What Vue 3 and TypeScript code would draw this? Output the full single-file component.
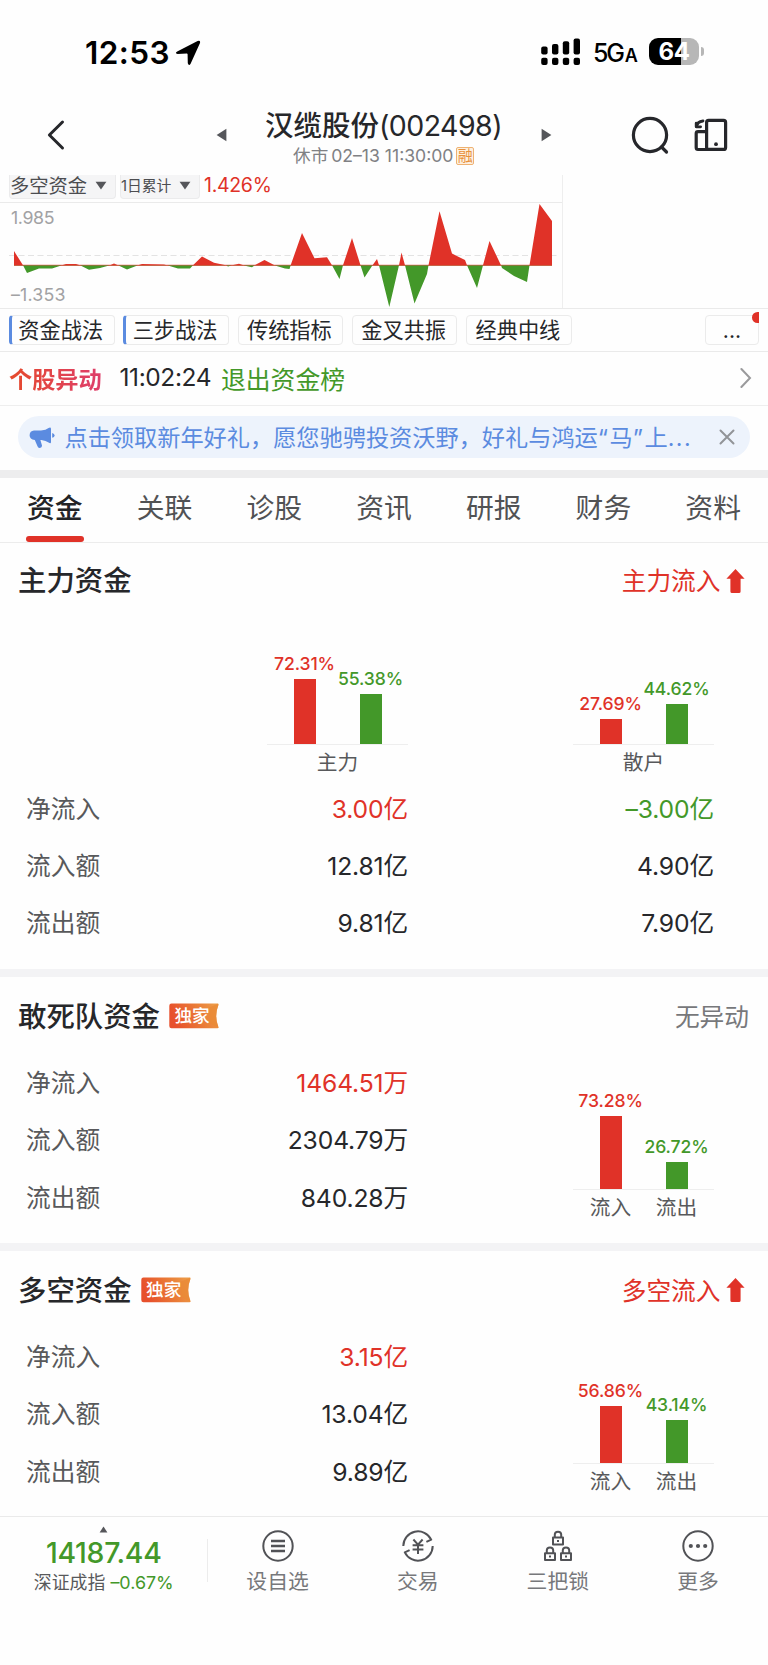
<script setup lang="ts">
interface Bar { pct: number; tone: 'up' | 'down'; label?: string }
interface Row { label: string; values: { text: string; tone?: 'up' | 'down' }[] }

const shortcuts = [
  { name: '资金战法', marked: true },
  { name: '三步战法', marked: true },
  { name: '传统指标', marked: false },
  { name: '金叉共振', marked: false },
  { name: '经典中线', marked: false },
]

const tabs = ['资金', '关联', '诊股', '资讯', '研报', '财务', '资料']

const mainGroups: { name: string; bars: Bar[] }[] = [
  { name: '主力', bars: [{ pct: 72.31, tone: 'up' }, { pct: 55.38, tone: 'down' }] },
  { name: '散户', bars: [{ pct: 27.69, tone: 'up' }, { pct: 44.62, tone: 'down' }] },
]

const mainRows: Row[] = [
  { label: '净流入', values: [{ text: '3.00亿', tone: 'up' }, { text: '–3.00亿', tone: 'down' }] },
  { label: '流入额', values: [{ text: '12.81亿' }, { text: '4.90亿' }] },
  { label: '流出额', values: [{ text: '9.81亿' }, { text: '7.90亿' }] },
]

const panels: { title: string; status: string; rising: boolean; rows: Row[]; bars: Bar[] }[] = [
  {
    title: '敢死队资金',
    status: '无异动',
    rising: false,
    rows: [
      { label: '净流入', values: [{ text: '1464.51万', tone: 'up' }] },
      { label: '流入额', values: [{ text: '2304.79万' }] },
      { label: '流出额', values: [{ text: '840.28万' }] },
    ],
    bars: [{ pct: 73.28, tone: 'up', label: '流入' }, { pct: 26.72, tone: 'down', label: '流出' }],
  },
  {
    title: '多空资金',
    status: '多空流入',
    rising: true,
    rows: [
      { label: '净流入', values: [{ text: '3.15亿', tone: 'up' }] },
      { label: '流入额', values: [{ text: '13.04亿' }] },
      { label: '流出额', values: [{ text: '9.89亿' }] },
    ],
    bars: [{ pct: 56.86, tone: 'up', label: '流入' }, { pct: 43.14, tone: 'down', label: '流出' }],
  },
]

// Zero line of the trend plot, in plot units
const zero = 62.3
const series: [number, number][] = [
  [14, 48], [23, 62.3], [27, 70], [39, 65.5], [52, 65.5], [62, 62.3], [66, 61], [76, 61], [80, 62.3],
  [89, 66.8], [100, 65], [110, 62.3], [114, 60.6], [118, 62.3], [127, 66.5], [138, 62.3], [142, 61],
  [164, 61.4], [167, 62.3], [178, 65.6], [190, 65.6], [193, 62.3], [202, 53.5], [214, 59.8], [226, 62.3],
  [228, 63.6], [232, 62.3], [239, 60.8], [245, 62.8], [252, 64.2], [256, 61.5], [264.5, 57], [275, 62.4],
  [285, 65.4], [289.5, 66], [291, 61.3], [302, 30], [314.5, 55.3], [327, 54.3], [332, 62.3], [339.5, 76],
  [343, 62.3], [352, 35], [360.5, 62.3], [364.5, 74.5], [372, 63], [377, 56], [379, 62.3], [389.3, 104],
  [399, 62.3], [401.5, 49.6], [405, 62.3], [414.5, 100.6], [427, 71], [428.5, 62.3], [439.5, 8.3],
  [452, 50.6], [465, 57], [467, 62.3], [477, 85], [483, 62.3], [489.5, 38], [501, 62.3], [502, 65],
  [514, 73], [527, 79], [529.5, 62.3], [539.5, 1], [552, 18],
]
const area = `M14 ${zero} ` + series.map(([x, y]) => `L${x} ${y}`).join(' ') + ` L552 ${zero} Z`
const risingArrow = 'M9.5 1 L18.6 10.8 H14.6 V23.4 Q14.6 25 13 25 H6 Q4.4 25 4.4 23.4 V10.8 H.4Z'
</script>

<template>
  <div class="screen">
    <div class="statusbar">
      <span class="clock">12:53</span>
      <svg class="locate" width="26" height="26" viewBox="0 0 26 26">
        <path d="M2.2 11.6 L22.6 1 Q25.6 0 25 3 L15.6 23.8 Q13.8 26.4 12.8 23.2 L12.6 14.2 Q12.5 13.5 11.8 13.4 L2.6 13.9 Q-.6 13.4 2.2 11.6Z" />
      </svg>
      <svg class="signal" width="40" height="28" viewBox="0 0 40 28">
        <g>
          <rect x="0.2" y="8.5" width="6.4" height="8" rx="2" /><rect x="11" y="6" width="6.4" height="10.5" rx="2" />
          <rect x="21.8" y="3.2" width="6.4" height="13.3" rx="2" /><rect x="32.6" y="0.4" width="6.4" height="16.1" rx="2" />
          <rect x="0.2" y="19.8" width="6.4" height="7.2" rx="2" /><rect x="11" y="19.8" width="6.4" height="7.2" rx="2" />
          <rect x="21.8" y="19.8" width="6.4" height="7.2" rx="2" /><rect x="32.6" y="19.8" width="6.4" height="7.2" rx="2" />
        </g>
      </svg>
      <span class="network">5G<small>A</small></span>
      <span class="battery">64</span>
      <span class="battery-tip"></span>
    </div>

    <header class="header">
      <svg class="back" width="20" height="32" viewBox="0 0 20 32"><path d="M16.5 3 L3.4 16 L16.5 29" /></svg>
      <svg class="prev" width="11" height="14" viewBox="0 0 11 14"><path d="M10.4 .8 V13.2 L.6 7Z" /></svg>
      <div class="stock">
        <h1>汉缆股份<span>(002498)</span></h1>
        <p>休市 <span>02–13 11:30:00</span><i>融</i></p>
      </div>
      <svg class="next" width="11" height="14" viewBox="0 0 11 14"><path d="M.6 .8 V13.2 L10.4 7Z" /></svg>
      <svg class="tool search" width="40" height="40" viewBox="0 0 40 40"><circle cx="19" cy="20" r="16.6" /><path d="M30.5 32 L35.5 37" /></svg>
      <svg class="tool layout" width="34" height="34" viewBox="0 0 34 34">
        <rect x="12.6" y="2.4" width="19" height="29" rx="2" />
        <path d="M12 13.6 H4 Q2.2 13.6 2.2 15.4 V29.6 Q2.2 31.5 4 31.5 H13" />
        <path class="turn" d="M2.6 8.6 Q3.2 3.6 9 3" /><path class="turn" d="M2.2 5.2 V8.8 H6.6" />
        <circle class="dot" cx="22" cy="26.2" r="1.9" />
      </svg>
    </header>

    <section class="indicator">
      <div class="selects">
        <span class="select wide">多空资金<svg width="12" height="9" viewBox="0 0 12 9"><path d="M.6 .8 H11.4 L6 8.6Z" /></svg></span>
        <span class="select slim">1日累计<svg width="12" height="9" viewBox="0 0 12 9"><path d="M.6 .8 H11.4 L6 8.6Z" /></svg></span>
        <b>1.426%</b>
      </div>
      <div class="plot">
        <svg width="562" height="105" viewBox="0 0 562 105">
          <defs>
            <clipPath id="above"><rect x="0" y="0" width="562" height="62.3" /></clipPath>
            <clipPath id="below"><rect x="0" y="62.3" width="562" height="43" /></clipPath>
          </defs>
          <path class="dash" d="M9 52.5 H560" />
          <path class="zero" d="M14 62.3 H552" />
          <path class="fill-up" :d="area" clip-path="url(#above)" />
          <path class="fill-down" :d="area" clip-path="url(#below)" />
        </svg>
        <span class="axis top">1.985</span>
        <span class="axis bottom">–1.353</span>
      </div>
    </section>

    <nav class="shortcuts">
      <a v-for="s in shortcuts" :key="s.name" :class="{ marked: s.marked }">{{ s.name }}</a>
      <a class="more">...<i></i></a>
    </nav>

    <div class="alert">
      <strong>个股异动</strong><time>11:02:24</time><em>退出资金榜</em>
      <svg width="12" height="22" viewBox="0 0 12 22"><path d="M1.4 2 L10 11 L1.4 20" /></svg>
    </div>

    <div class="notice-wrap">
      <div class="notice">
        <svg class="horn" width="26" height="22" viewBox="0 0 26 22">
          <path d="M5 3.6 H12 Q17 3.2 19.6 1 Q22 -.2 22 2 V15 Q22 17 19.6 15.6 Q17 13.6 12.4 13 L11.4 13 L13 18.5 Q13.2 21 10.8 21 Q9.4 21 8.6 19.4 L5.8 13 Q.6 12.4 .6 8.2 Q.8 4 5 3.6Z" />
          <path d="M23.2 6 Q25.6 6.6 25.6 8.4 Q25.6 10.2 23.2 10.8Z" />
        </svg>
        <p>点击领取新年好礼，愿您驰骋投资沃野，好礼与鸿运<q>“</q>马<q>”</q>上<q>...</q></p>
        <svg class="close" width="16" height="16" viewBox="0 0 16 16"><path d="M1.5 1.5 L14.5 14.5 M14.5 1.5 L1.5 14.5" /></svg>
      </div>
    </div>

    <nav class="tabs">
      <a v-for="(t, i) in tabs" :key="t" :class="{ active: i === 0 }">{{ t }}</a>
    </nav>

    <section class="panel main">
      <div class="panel-head">
        <h2>主力资金</h2>
        <span class="status up">主力流入<svg width="19" height="26" viewBox="0 0 19 26"><path :d="risingArrow" /></svg></span>
      </div>
      <div class="groups">
        <div v-for="g in mainGroups" :key="g.name" class="chart">
          <div class="bars">
            <div v-for="b in g.bars" :key="b.pct" class="bar" :class="b.tone">
              <span>{{ b.pct.toFixed(2) }}%</span>
              <i :style="{ height: b.pct * 0.891 + 'px' }"></i>
            </div>
          </div>
          <div class="names"><span>{{ g.name }}</span></div>
        </div>
      </div>
      <div class="rows">
        <div v-for="r in mainRows" :key="r.label" class="row">
          <label>{{ r.label }}</label>
          <span v-for="v in r.values" :key="v.text" :class="v.tone">{{ v.text }}</span>
        </div>
      </div>
    </section>

    <section v-for="p in panels" :key="p.title" class="panel split">
      <div class="panel-head">
        <h2>{{ p.title }}</h2>
        <span class="tag">
          <svg width="50" height="26" viewBox="0 0 50 26">
            <defs>
              <linearGradient id="tagfill" x1="0" x2="1" y1="0.2" y2="0"><stop offset="0" stop-color="#e7502c" /><stop offset=".55" stop-color="#ea7c37" /><stop offset="1" stop-color="#eda04a" /></linearGradient>
            </defs>
            <path fill="url(#tagfill)" d="M2.5 .6 H48.6 Q50 .6 49.4 2 Q45 13 49.4 23.8 Q50 25.2 48.6 25.2 H2.5 Q.3 25.2 .3 23 V2.8 Q.3 .6 2.5 .6Z" />
            <path fill="#e98a35" opacity=".75" d="M49 .8 L39 5 L40.5 20 L49.4 25 Q45 13 49.4 2Z" />
          </svg>
          <b>独家</b>
        </span>
        <span class="status" :class="{ up: p.rising }">{{ p.status }}<svg v-if="p.rising" width="19" height="26" viewBox="0 0 19 26"><path :d="risingArrow" /></svg></span>
      </div>
      <div class="body">
        <div class="rows">
          <div v-for="r in p.rows" :key="r.label" class="row">
            <label>{{ r.label }}</label>
            <span v-for="v in r.values" :key="v.text" :class="v.tone">{{ v.text }}</span>
          </div>
        </div>
        <div class="chart">
          <div class="bars">
            <div v-for="b in p.bars" :key="b.pct" class="bar" :class="b.tone">
              <span>{{ b.pct.toFixed(2) }}%</span>
              <i :style="{ height: b.pct + 'px' }"></i>
            </div>
          </div>
          <div class="names"><span v-for="b in p.bars" :key="b.pct">{{ b.label }}</span></div>
        </div>
      </div>
    </section>

    <footer class="bottombar">
      <div class="index">
        <svg width="9" height="7" viewBox="0 0 9 7"><path d="M4.5 .4 L8.4 6.4 H.6Z" /></svg>
        <strong>14187.44</strong>
        <p>深证成指 <span>–0.67%</span></p>
      </div>
      <a>
        <svg width="32" height="32" viewBox="0 0 32 32"><circle cx="16" cy="16" r="14.7" /><path class="thick" d="M9 11 H23 M9 16 H23 M9 21 H23" /></svg>设自选
      </a>
      <a>
        <svg width="32" height="32" viewBox="0 0 32 32">
          <path d="M1.3 16 A14.7 14.7 0 0 1 29.2 9.6 L24.4 11.8" /><path d="M30.7 16 A14.7 14.7 0 0 1 2.8 22.4 L7.6 20.2" />
          <path d="M11.4 9.5 L16 14.6 L20.6 9.5 M16 14.6 V24 M10.6 15.2 H21.4 M10.6 19.4 H21.4" />
        </svg>交易
      </a>
      <a>
        <svg width="32" height="32" viewBox="0 0 32 32">
          <path d="M11 7.6 H21 V14.4 H11Z M12.8 7.4 V4.6 Q12.8 1.8 16 1.8 Q19.2 1.8 19.2 4.6 V7.4 M16 10 V12" />
          <path d="M3 23.2 H13 V30 H3Z M4.8 23 V20.2 Q4.8 17.4 8 17.4 Q11.2 17.4 11.2 20.2 V23 M8 25.6 V27.6" />
          <path d="M19 23.2 H29 V30 H19Z M20.8 23 V20.2 Q20.8 17.4 24 17.4 Q27.2 17.4 27.2 20.2 V23 M24 25.6 V27.6" />
        </svg>三把锁
      </a>
      <a>
        <svg width="32" height="32" viewBox="0 0 32 32"><circle cx="16" cy="16" r="14.7" /><g class="solid"><circle cx="8.8" cy="16" r="2.1" /><circle cx="16" cy="16" r="2.1" /><circle cx="23.2" cy="16" r="2.1" /></g></svg>更多
      </a>
    </footer>
  </div>
</template>

<style>
body { background: #fefefe; }
</style>

<style scoped>
* { box-sizing: border-box; margin: 0; padding: 0; }
.screen {
  width: 768px; height: 1665px; overflow: hidden; background: #fefefe; color: #26272a;
  font-family: Inter, "Noto Sans CJK SC", sans-serif; display: flex; flex-direction: column;
}
.screen > * { flex: none; }
svg { display: block; flex: none; }
i, em { font-style: normal; }
.up { color: #e03228; }
.down { color: #439829; }

.statusbar { height: 103px; padding: 2px 64px 0 85px; display: flex; align-items: center; color: #000; }
.clock { font-size: 31.5px; font-weight: 600; width: 90px; white-space: nowrap; letter-spacing: .4px; }
.signal { margin-left: 340px; margin-bottom: 2px; }
.network { width: 68px; padding-left: 12px; font-size: 25px; font-weight: 500; white-space: nowrap; letter-spacing: -2.2px; padding-top: 1px; }
.network small { font-size: 18px; font-weight: 600; margin-left: 2px; }
.battery {
  width: 50px; height: 27px; border-radius: 9px; margin-bottom: 2px; color: #fff; text-align: center;
  background: linear-gradient(90deg, #000 64%, #b7b7b7 64%); font-size: 24px; font-weight: 700; line-height: 27px; letter-spacing: -.5px;
}
.battery-tip { width: 3px; height: 9px; margin: 0 0 2px 2px; border-radius: 0 4px 4px 0; background: #b7b7b7; }

.header { height: 72px; display: flex; align-items: center; padding-bottom: 8px; }
.back { margin-left: 46px; }
.back path { fill: none; stroke: #26272b; stroke-width: 3; stroke-linecap: round; stroke-linejoin: round; }
.prev { margin-left: 150px; }
.prev, .next { fill: #55565a; }
.stock { width: 313px; margin-right: 1px; text-align: center; white-space: nowrap; padding-top: 6px; }
.stock h1 { font-size: 28.5px; font-weight: 500; line-height: 36px; }
.stock h1 span { letter-spacing: -.55px; font-weight: 400; }
.stock p { font-size: 17.6px; line-height: 24px; color: #808184; display: flex; justify-content: center; align-items: center; gap: 3px; }
.stock p i { font-size: 15px; line-height: 16px; width: 17.5px; height: 18px; border: 1px solid #eeb273; background: #fdf0e0; color: #e8913c; border-radius: 2px; }
.tool { fill: none; stroke: #26272b; stroke-width: 3.2; stroke-linecap: round; stroke-linejoin: round; }
.tool .dot { fill: #26272b; stroke: none; }
.tool .turn { stroke-width: 2.8; }
.search { margin-left: 78.5px; }
.layout { margin-left: 23px; }

.indicator { width: 563px; height: 133px; border-right: 1px solid #eee; }
.selects { height: 27px; display: flex; align-items: flex-start; padding-left: 9px; }
.select { height: 24px; display: flex; align-items: center; justify-content: space-between; background: #f5f5f6; border: 1px solid #ebebec; border-top: 0; border-radius: 0 0 4px 4px; color: #4c4d50; white-space: nowrap; padding-bottom: 4px; }
.select svg { fill: #55565a; position: relative; top: 1px; }
.wide { width: 107px; font-size: 19.3px; padding-right: 8px; }
.slim { width: 80px; margin-left: 4px; font-size: 14.8px; padding-right: 8px; }
.selects b { margin-left: 4px; font-weight: 400; font-size: 19.5px; line-height: 20px; color: #e03228; letter-spacing: -.3px; }
.plot { position: relative; height: 106px; border-top: 1px solid #eaeaea; }
.dash { stroke: #e3e3e3; stroke-width: 1; stroke-dasharray: 6 3.5; }
.zero { stroke: #e03228; stroke-width: 1; }
.fill-up { fill: #e03228; }
.fill-down { fill: #439829; }
.axis { position: absolute; left: 11px; font-size: 17.8px; line-height: 20px; color: #a2a2a4; letter-spacing: -.4px; }
.axis.top { top: 5px; }
.axis.bottom { bottom: 3px; letter-spacing: .2px; }

.shortcuts { height: 43.5px; border-top: 1px solid #eaeaea; border-bottom: 1px solid #eaeaea; display: flex; align-items: center; gap: 8.8px; padding: 0 9px; }
.shortcuts a { width: 105.5px; height: 29.5px; border: 1px solid #ebebeb; border-radius: 4px; font-size: 21.2px; line-height: 28px; text-align: center; white-space: nowrap; padding-right: 2px; }
.shortcuts .marked { border-left: 3px solid #5b8be0; padding-right: 4px; }
.shortcuts .more { position: relative; width: 54px; margin-left: auto; padding-right: 0; }
.more i { position: absolute; right: -1px; top: -4.5px; width: 7.5px; height: 11px; background: #e03228; border-radius: 6px 0 0 6px; }

.alert { height: 54px; border-bottom: 1px solid #eee; display: flex; align-items: center; padding: 0 16.5px 1px 9px; white-space: nowrap; }
.alert strong { font-size: 23.2px; font-weight: 700; width: 110.5px; background: linear-gradient(90deg, #e54a2b, #df3f63 80px, #dd3f74) ; -webkit-background-clip: text; background-clip: text; color: transparent; }
.alert time { width: 101.5px; font-size: 24.5px; letter-spacing: -.4px; padding-bottom: 1px; }
.alert em { font-size: 24.8px; color: #439829; flex: 1; }
.alert svg path { fill: none; stroke: #9a9a9c; stroke-width: 2; stroke-linecap: round; }

.notice-wrap { height: 72px; padding: 10px 18px 11px; border-bottom: 8.5px solid #ededee; }
.notice { height: 42px; border-radius: 21px; background: #edf3fc; color: #5b8be0; display: flex; align-items: center; padding: 0 15.5px 0 11px; font-size: 23.2px; white-space: nowrap; }
.notice p { flex: 1; margin-left: 9.5px; padding-bottom: 2px; }
.notice q { quotes: none; letter-spacing: 1.5px; }
.horn { fill: #5b8be0; margin-top: 2px; }
.close path { fill: none; stroke: #929498; stroke-width: 2; stroke-linecap: round; }

.tabs { height: 65.5px; border-bottom: 1px solid #ececec; display: grid; grid-template-columns: repeat(7, 1fr); }
.tabs a { position: relative; text-align: center; font-size: 27.8px; line-height: 60px; color: #515254; }
.tabs .active { color: #222326; font-weight: 500; }
.tabs .active::after { content: ""; position: absolute; left: 26px; width: 57.5px; bottom: 0; height: 6px; border-radius: 3px; background: #e03228; }

.panel { border-bottom: 8.5px solid #f3f3f5; padding-bottom: 17px; }
.panel:last-of-type { border-bottom: 0; padding-bottom: 15.5px; }
.panel-head { height: 77.5px; display: flex; align-items: center; padding: 1.5px 19px 0 18px; }
.main .panel-head { padding-top: 0; padding-bottom: 1px; }
.panel-head h2 { font-size: 28.4px; font-weight: 500; line-height: 40px; }
.tag { position: relative; margin-left: 9.5px; margin-bottom: 2px; width: 50px; height: 26px; }
.tag b { position: absolute; left: 5px; top: 0; font-size: 17.6px; font-weight: 500; line-height: 25px; color: #fff; white-space: nowrap; }
.status { margin-left: auto; font-size: 24.7px; line-height: 30px; color: #77787b; display: flex; align-items: center; gap: 5.5px; }
.status.up { color: #e03228; padding-right: 4px; }
.status svg { fill: #e03228; margin-bottom: 1px; }
.groups { height: 160px; display: flex; gap: 165px; padding-left: 267px; }
.chart { width: 141px; height: 100%; display: flex; flex-direction: column; justify-content: flex-end; padding-bottom: 3px; }
.bars { display: flex; justify-content: space-between; align-items: flex-end; padding: 0 26.5px; border-bottom: 1px solid #eee; }
.bar { width: 22px; display: flex; flex-direction: column; align-items: center; }
.bar span { font-size: 17.6px; line-height: 20px; font-weight: 500; margin-bottom: 5px; white-space: nowrap; letter-spacing: -.1px; }
.bar i { width: 22px; background: currentColor; }
.names { height: 33px; display: flex; justify-content: center; gap: 24.6px; font-size: 20.7px; line-height: 36px; color: #58595b; }
.row { height: 57.2px; padding-left: 26px; padding-bottom: 4px; display: grid; grid-template-columns: 141px 241px 306px; align-items: center; font-size: 24.7px; white-space: nowrap; }
.row label { color: #58595b; }
.row span { text-align: right; letter-spacing: -.15px; }
.body { display: flex; }
.split .rows { width: 573px; }
.split .chart { height: 171.6px; }

.bottombar { flex: 1 !important; border-top: 1px solid #eaeaea; display: grid; grid-template-columns: 207.5px repeat(4, 1fr); align-items: start; }
.index { position: relative; display: flex; flex-direction: column; align-items: center; padding-top: 9px; }
.index::after { content: ""; position: absolute; right: 0; top: 22px; width: 1px; height: 43px; background: #ececec; }
.index svg { fill: #55565a; }
.index strong { font-size: 28.4px; font-weight: 500; line-height: 34px; color: #439829; margin-top: 3px; letter-spacing: -.3px; }
.index p { font-size: 17.9px; line-height: 22px; color: #58595b; margin-top: 2px; white-space: nowrap; }
.index p span { color: #439829; }
.bottombar a { display: flex; flex-direction: column; align-items: center; padding-top: 13px; font-size: 20.8px; line-height: 39px; color: #77787b; }
.bottombar a svg { fill: none; stroke: #515256; stroke-width: 2; stroke-linejoin: round; }
.bottombar .thick { stroke-width: 2.4; }
.bottombar .solid { fill: #515256; stroke: none; }
</style>
